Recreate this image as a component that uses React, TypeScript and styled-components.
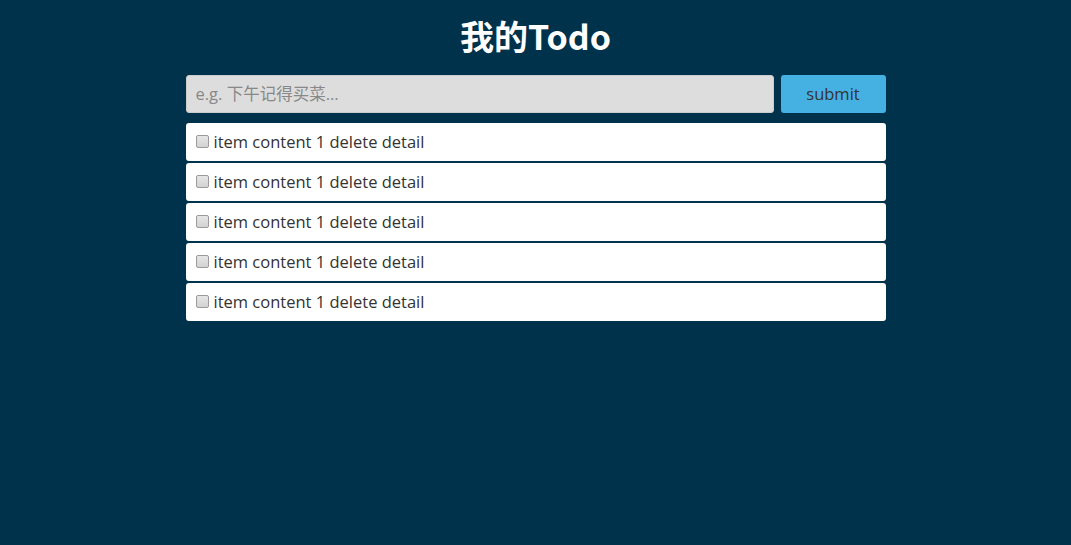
import React from "react";
import styled, { createGlobalStyle } from "styled-components";

const Global = createGlobalStyle`
  html, body { margin: 0; padding: 0; background: #00324b; }
  body { font-family: "Open Sans", "Noto Sans CJK SC", sans-serif; }
  * { box-sizing: border-box; }
`;

const Page = styled.div`
  min-height: 545px;
  background: #00324b;
  display: flex;
  flex-direction: column;
  align-items: center;
  padding-top: 12px;
`;

const Title = styled.h1`
  margin: 0;
  height: 48px;
  line-height: 48px;
  color: #fff;
  font-size: 34px;
  font-weight: bold;
  font-family: "Noto Sans CJK SC", sans-serif;
`;

const Container = styled.div`
  width: 700px;
  margin-top: 15px;
  display: flex;
  flex-direction: column;
`;

const Form = styled.form`
  display: flex;
  gap: 7px;
  margin-bottom: 10px;
`;

const Input = styled.input`
  flex: 1;
  height: 38px;
  border: 1px solid #ccc;
  border-radius: 3px;
  background: #dddddd;
  padding: 0 9px 2px;
  font-size: 16.5px;
  font-family: "Open Sans", "Noto Sans CJK SC", sans-serif;
  color: #333;
  outline: none;
  &::placeholder { color: #888; }
`;

const Button = styled.button`
  width: 105px;
  height: 38px;
  border: none;
  border-radius: 3px;
  background: #45b1e3;
  color: #333;
  font-size: 16.5px;
  font-family: "Open Sans", "Noto Sans CJK SC", sans-serif;
  padding: 0 0 2px;
  cursor: pointer;
`;

const List = styled.ul`
  list-style: none;
  margin: 0;
  padding: 0;
  display: flex;
  flex-direction: column;
  gap: 2px;
`;

const Item = styled.li`
  height: 38px;
  background: #fff;
  border-radius: 3px;
  display: flex;
  align-items: center;
  padding: 0 0 2px 10px;
  font-size: 16.5px;
  color: #333;
`;

const Check = styled.input`
  appearance: none;
  width: 13px;
  height: 13px;
  margin: 0 5px 0 0;
  border: 1px solid #9a9a9a;
  border-radius: 2px;
  background: linear-gradient(#e6e6e6, #d2d2d2);
`;

export default function App() {
  const items = [1, 2, 3, 4, 5];
  return (
    <>
      <Global />
      <Page>
        <Title>我的Todo</Title>
        <Container>
          <Form onSubmit={(e) => e.preventDefault()}>
            <Input placeholder="e.g. 下午记得买菜..." />
            <Button type="submit">submit</Button>
          </Form>
          <List>
            {items.map((i) => (
              <Item key={i}>
                <Check type="checkbox" />
                item content 1 delete detail
              </Item>
            ))}
          </List>
        </Container>
      </Page>
    </>
  );
}
